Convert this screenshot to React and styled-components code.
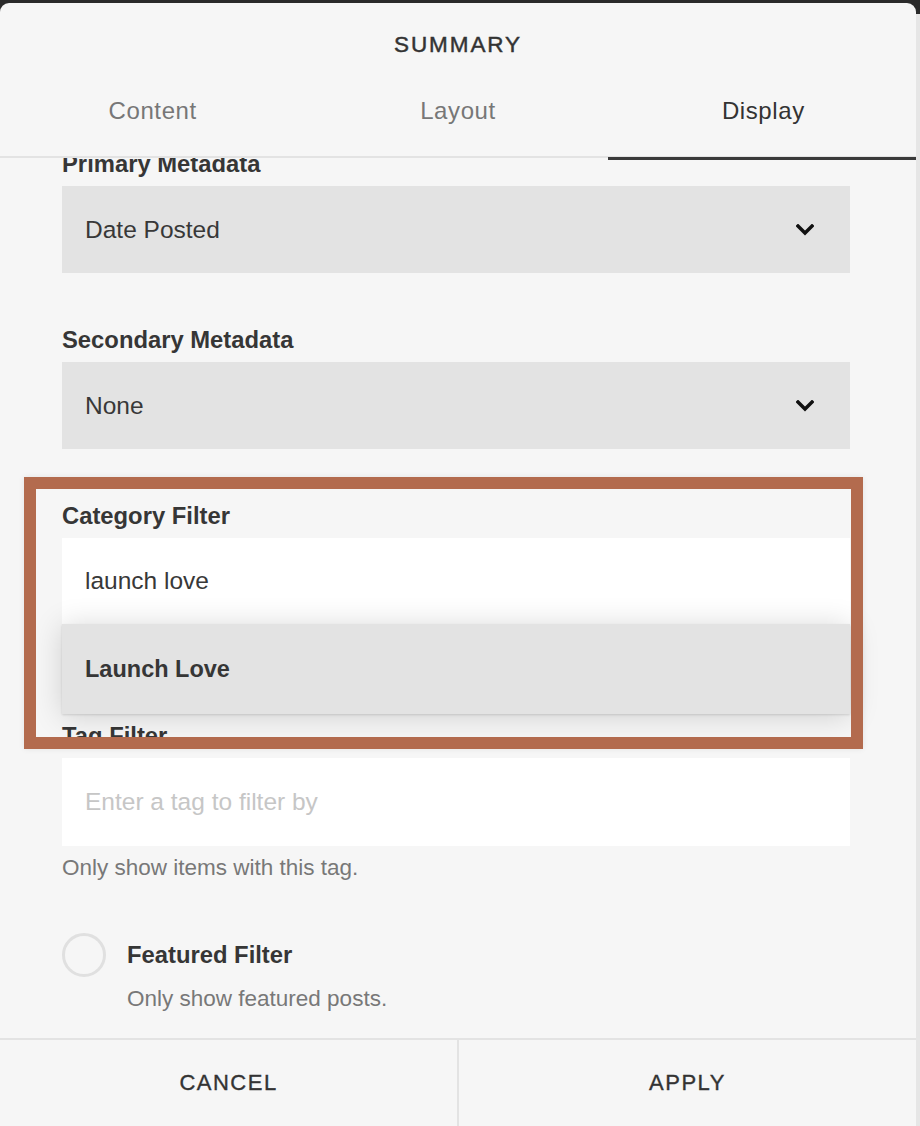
import React from "react";
import styled, { createGlobalStyle } from "styled-components";

const GlobalStyle = createGlobalStyle`
  html, body { margin: 0; padding: 0; }
  body {
    font-family: "Liberation Sans", Arial, sans-serif;
    background: #e6e6e6;
  }
  * { box-sizing: border-box; }
`;

const Page = styled.div`
  position: relative;
  width: 920px;
  height: 1126px;
  display: flex;
  background: linear-gradient(#2b2b2b 0 14px, #e6e6e6 14px);
  overflow: hidden;
`;

const Panel = styled.div`
  width: 916px;
  margin-top: 3px;
  height: 1123px;
  background: #f6f6f6;
  border-radius: 9px 9px 0 0;
  display: flex;
  flex-direction: column;
`;

const Title = styled.div`
  height: 84px;
  display: flex;
  align-items: center;
  justify-content: center;
  font-size: 22.5px;
  letter-spacing: 1.9px;
  color: #333;
  font-weight: 400;
  -webkit-text-stroke: 0.45px #333;
`;

const TabBar = styled.div`
  height: 71px;
  display: grid;
  grid-template-columns: repeat(3, 1fr);
  border-bottom: 2px solid #e3e3e3;
`;

const Tab = styled.div`
  position: relative;
  height: 48px;
  display: flex;
  align-items: center;
  justify-content: center;
  font-size: 24px;
  letter-spacing: 0.6px;
  color: ${(p) => (p.$active ? "#333" : "#777")};
  &::after {
    content: "";
    display: ${(p) => (p.$active ? "block" : "none")};
    position: absolute;
    left: -3px;
    right: 0;
    bottom: -25px;
    height: 3px;
    background: #3a3a3a;
  }
`;

const Body = styled.div`
  flex: 1;
  overflow: hidden;
  padding: 0 66px 0 62px;
`;

const Scrolled = styled.div`
  margin-top: -9px;
  display: flex;
  flex-direction: column;
`;

const Field = styled.div`
  display: flex;
  flex-direction: column;
  gap: 7px;
  margin-bottom: ${(p) => p.$space}px;
`;

const Label = styled.div`
  height: 30px;
  line-height: 30px;
  font-size: 23.8px;
  font-weight: 700;
  color: #363636;
`;

const Select = styled.div`
  height: 87px;
  background: #e3e3e3;
  display: flex;
  align-items: center;
  justify-content: space-between;
  padding: 0 36px 0 23px;
  font-size: 24.5px;
  color: #383838;
`;

const InputWrap = styled.div`
  position: relative;
`;

const Input = styled.div`
  height: ${(p) => p.$h}px;
  background: #fff;
  display: flex;
  align-items: center;
  padding: 0 23px;
  font-size: 24.5px;
  color: ${(p) => (p.$placeholder ? "#c6c6c6" : "#383838")};
`;

const Menu = styled.div`
  position: absolute;
  top: 100%;
  left: 0;
  right: 0;
  z-index: 2;
  height: 90px;
  background: #e3e3e3;
  display: flex;
  align-items: center;
  padding: 0 23px;
  font-size: 23.5px;
  font-weight: 700;
  color: #363636;
  box-shadow: 0 2px 28px rgba(0, 0, 0, 0.16), 0 1px 2px rgba(0, 0, 0, 0.12);
`;

const Help = styled.div`
  height: 30px;
  line-height: 30px;
  font-size: 22.5px;
  color: #787878;
`;

const ToggleRow = styled.div`
  display: grid;
  grid-template-columns: 44px 1fr;
  column-gap: 21px;
  row-gap: 7px;
  align-items: center;
`;

const Radio = styled.div`
  width: 44px;
  height: 44px;
  border-radius: 50%;
  border: 3px solid #e0e0e0;
`;

const ToggleLabel = styled(Label)``;

const ToggleHelp = styled(Help)`
  grid-column: 2;
`;

const Footer = styled.div`
  height: 88px;
  border-top: 2px solid #e3e3e3;
  display: grid;
  grid-template-columns: 457px 1fr;
`;

const FooterButton = styled.div`
  display: flex;
  align-items: center;
  justify-content: center;
  font-size: 22px;
  letter-spacing: 1.5px;
  color: #333;
  -webkit-text-stroke: 0.35px #333;
  border-left: ${(p) => (p.$divider ? "2px solid #e3e3e3" : "none")};
`;

const Highlight = styled.div`
  position: absolute;
  left: 24px;
  top: 477px;
  width: 839px;
  height: 272px;
  border: 12px solid #b36b4e;
  pointer-events: none;
  z-index: 5;
  box-shadow: 0 0 6px rgba(0, 0, 0, 0.08);
`;

const Chevron = () => (
  <svg width="18" height="12" viewBox="0 0 18 12">
    <polyline
      points="2,2 9,9 16,2"
      fill="none"
      stroke="#111"
      strokeWidth="3.4"
      strokeLinecap="square"
    />
  </svg>
);

export default function App() {
  return (
    <>
      <GlobalStyle />
      <Page>
        <Panel>
          <Title>SUMMARY</Title>
          <TabBar>
            <Tab>Content</Tab>
            <Tab>Layout</Tab>
            <Tab $active>Display</Tab>
          </TabBar>
          <Body>
            <Scrolled>
              <Field $space={52}>
                <Label>Primary Metadata</Label>
                <Select>
                  Date Posted
                  <Chevron />
                </Select>
              </Field>
              <Field $space={52}>
                <Label>Secondary Metadata</Label>
                <Select>
                  None
                  <Chevron />
                </Select>
              </Field>
              <Field $space={60}>
                <Label>Category Filter</Label>
                <InputWrap>
                  <Input $h={86}>launch love</Input>
                  <Menu>Launch Love</Menu>
                </InputWrap>
                <Help>Only show items in this category.</Help>
              </Field>
              <Field $space={50}>
                <Label>Tag Filter</Label>
                <Input $h={88} $placeholder>
                  Enter a tag to filter by
                </Input>
                <Help>Only show items with this tag.</Help>
              </Field>
              <ToggleRow>
                <Radio />
                <ToggleLabel>Featured Filter</ToggleLabel>
                <ToggleHelp>Only show featured posts.</ToggleHelp>
              </ToggleRow>
            </Scrolled>
          </Body>
          <Footer>
            <FooterButton>CANCEL</FooterButton>
            <FooterButton $divider>APPLY</FooterButton>
          </Footer>
        </Panel>
        <Highlight />
      </Page>
    </>
  );
}
